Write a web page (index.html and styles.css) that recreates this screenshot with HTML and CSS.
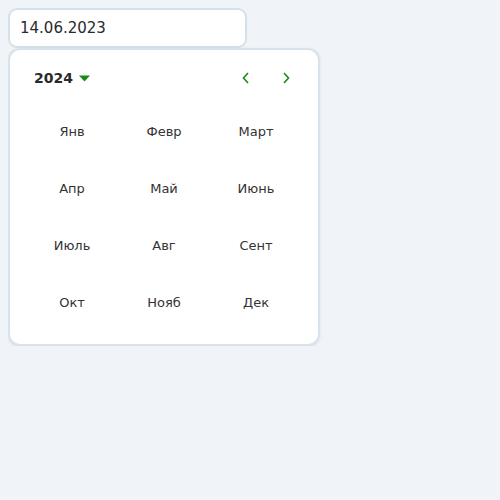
FILE: index.html
```html
<!DOCTYPE html>
<html>
<head>
<meta charset="utf-8">
<link rel="stylesheet" href="styles.css">
</head>
<body>
<div class="input">14.06.2023</div>
<div class="panel">
  <div class="header">
    <div class="year">2024 <svg class="caret" width="11" height="7" viewBox="0 0 11 7"><path d="M0 0.5h11L5.5 6.5z" fill="#178a17"/></svg></div>
    <div class="nav">
      <button class="btn"><svg width="8" height="12" viewBox="0 0 8 12"><path d="M6 1L1.5 6 6 11" fill="none" stroke="#178a17" stroke-width="1.6"/></svg></button>
      <button class="btn"><svg width="8" height="12" viewBox="0 0 8 12"><path d="M2 1l4.5 5L2 11" fill="none" stroke="#178a17" stroke-width="1.6"/></svg></button>
    </div>
  </div>
  <div class="grid">
    <div class="m">Янв</div><div class="m">Февр</div><div class="m">Март</div>
    <div class="m">Апр</div><div class="m">Май</div><div class="m">Июнь</div>
    <div class="m">Июль</div><div class="m">Авг</div><div class="m">Сент</div>
    <div class="m">Окт</div><div class="m">Нояб</div><div class="m">Дек</div>
  </div>
</div>
</body>
</html>
```
FILE: styles.css
```css
body {
  margin: 8px;
  background: #f0f4f8;
  font-family: "DejaVu Sans", sans-serif;
  color: #2a2a2a;
}
.input {
  box-sizing: border-box;
  width: 239px;
  height: 40px;
  border: 2px solid #d6e0e9;
  border-radius: 9px;
  background: #fff;
  padding-left: 10px;
  font-size: 15px;
  line-height: 36px;
}
.panel {
  box-sizing: border-box;
  width: 312px;
  height: 298px;
  margin-top: 0;
  border: 2px solid #d8e2eb;
  border-radius: 12px;
  background: #fff;
  padding: 16px 16px 12px;
  box-shadow: 0 1px 3px rgba(160, 180, 200, 0.3);
}
.header {
  display: flex;
  justify-content: space-between;
  align-items: center;
  height: 24px;
  padding-left: 8px;
}
.year {
  display: flex;
  align-items: center;
  gap: 6px;
  font-weight: bold;
  font-size: 14px;
}
.nav { display: flex; gap: 8px; }
.btn {
  width: 32px;
  height: 24px;
  border: none;
  background: none;
  padding: 0;
  display: flex;
  align-items: center;
  justify-content: center;
}
.grid {
  margin-top: 13px;
  display: grid;
  grid-template-columns: repeat(3, 92px);
  grid-template-rows: repeat(4, 57px);
}
.m {
  display: flex;
  align-items: center;
  justify-content: center;
  font-size: 13px;
  color: #333;
}
```
